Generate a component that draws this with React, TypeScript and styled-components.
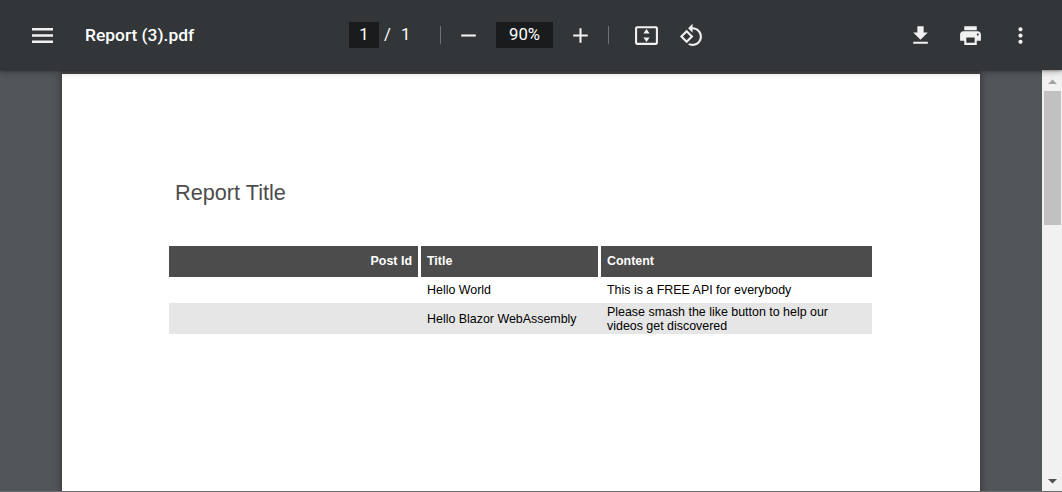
import React from "react";
import styled, { createGlobalStyle } from "styled-components";

const GlobalStyle = createGlobalStyle`
  *, *::before, *::after { box-sizing: border-box; }
  html, body { margin: 0; padding: 0; overflow: hidden; }
`;

const Viewer = styled.div`
  display: flex;
  flex-direction: column;
  width: 1062px;
  height: 492px;
  background: #525659;
  border-bottom: 1px solid #6b6b6b;
  overflow: hidden;
`;

const Toolbar = styled.header`
  position: relative;
  z-index: 1;
  flex: none;
  display: flex;
  align-items: center;
  height: 70px;
  padding: 1px 29px 0 30px;
  background: #323639;
  color: #fff;
  font: 400 17.4px/26px Roboto, sans-serif;
  box-shadow: 0 -2px 8px rgba(0, 0, 0, 0.09), 0 4px 8px rgba(0, 0, 0, 0.06),
    0 1px 2px rgba(0, 0, 0, 0.3), 0 2px 6px rgba(0, 0, 0, 0.15);
`;

const IconButton = styled.button<{ $gap?: number }>`
  flex: none;
  display: flex;
  width: 25px;
  height: 25px;
  margin: 0 0 0 ${(p) => p.$gap ?? 0}px;
  padding: 0;
  border: 0;
  background: none;
  color: #f1f1f1;

  svg {
    display: block;
    width: 25px;
    height: 25px;
    fill: currentColor;
  }
`;

const FileName = styled.span`
  width: 264px;
  margin: -2px 0 0 30px;
  font-weight: 500;
  font-size: 17.4px;
  white-space: nowrap;
`;

const Field = styled.span<{ $width: number; $gap?: number }>`
  flex: none;
  width: ${(p) => p.$width}px;
  height: 26px;
  margin: -1px 0 0 ${(p) => p.$gap ?? 0}px;
  background: #191b1c;
  font-size: 16.7px;
  line-height: 26px;
  text-align: center;
`;

const PageCount = styled.span`
  display: flex;
  gap: 10px;
  width: 61px;
  padding-left: 5px;
  margin-top: -1px;
  font-size: 16.7px;
`;

const Divider = styled.span<{ $gap?: number }>`
  flex: none;
  width: 1px;
  height: 18px;
  margin: -1px 0 0 ${(p) => p.$gap ?? 0}px;
  background: #6f7274;
`;

const Actions = styled.div`
  display: flex;
  gap: 25px;
  margin-left: auto;
`;

const Body = styled.div`
  flex: 1;
  min-height: 0;
  display: flex;
`;

const Canvas = styled.main`
  flex: 1;
  display: flex;
  padding: 4px 62px 0;
`;

const Page = styled.article`
  width: 918px;
  padding: 107px 108px 0 107px;
  background: #fff;
  color: #000;
  font: 12.43px/14px "Liberation Sans", Arial, sans-serif;
  box-shadow: 0 0 6px 2px rgba(48, 40, 48, 0.6);
`;

const ReportTitle = styled.h1`
  margin: 0 0 41px;
  padding-left: 6px;
  color: #4c4c4c;
  font-size: 21.7px;
  font-weight: 400;
  line-height: 24px;
`;

const Row = styled.div<{ $height: number; $shaded?: boolean }>`
  display: grid;
  grid-template-columns: 249px 177px 271px;
  column-gap: 3px;
  height: ${(p) => p.$height}px;
  background: ${(p) => (p.$shaded ? "#e6e6e6" : "transparent")};
`;

const Cell = styled.div`
  display: flex;
  align-items: center;
  padding: 0 6px;
`;

const HeadCell = styled(Cell)<{ $right?: boolean }>`
  justify-content: ${(p) => (p.$right ? "flex-end" : "flex-start")};
  padding-bottom: 2px;
  background: #4c4c4c;
  color: #fff;
  font-weight: 700;
`;

const ScrollTrack = styled.aside`
  flex: none;
  display: flex;
  flex-direction: column;
  align-items: center;
  width: 20px;
  background: #f1f1f1;
`;

const ScrollArrow = styled.svg`
  flex: none;
  display: block;
  width: 20px;
  height: 21px;
`;

const ScrollThumb = styled.div`
  width: 17px;
  height: 134px;
  margin: 0 1px auto 2px;
  background: #c1c1c1;
`;

const Icon = ({ d }: { d: string }) => (
  <svg viewBox="0 0 24 24" aria-hidden="true">
    <path d={d} />
  </svg>
);

const icons = {
  remove: "M19 13H5v-2h14v2z",
  add: "M19 13h-6v6h-2v-6H5v-2h6V5h2v6h6v2z",
  fit: "M21 3H3c-1.1 0-2 .9-2 2v14c0 1.1.9 2 2 2h18c1.1 0 2-.9 2-2V5c0-1.1-.9-2-2-2zm0 16.01H3V4.99h18v14.02zM12 5.7l-3 4.3h6zM12 18.3l3-4.3H9z",
  rotate:
    "M7.34 6.41L.86 12.9l6.49 6.48 6.49-6.48-6.5-6.49zM3.69 12.9l3.66-3.66L11 12.9l-3.66 3.66-3.65-3.66zm15.67-6.26C17.61 4.88 15.3 4 13 4V.76L8.76 5 13 9.24V6c1.79 0 3.58.68 4.95 2.05 2.73 2.73 2.73 7.17 0 9.9C16.58 19.32 14.79 20 13 20c-.97 0-1.94-.21-2.84-.61l-1.49 1.49C10.02 21.62 11.51 22 13 22c2.3 0 4.61-.88 6.36-2.64 3.52-3.51 3.52-9.21 0-12.72z",
  download: "M19 9h-4V3H9v6H5l7 7 7-7zM5 18v2h14v-2H5z",
  print:
    "M19 8H5c-1.66 0-3 1.34-3 3v6h4v4h12v-4h4v-6c0-1.66-1.34-3-3-3zm-3 11H8v-5h8v5zm3-7c-.55 0-1-.45-1-1s.45-1 1-1 1 .45 1 1-.45 1-1 1zm-1-9H6v4h12V3z",
  more: "M12 8c1.1 0 2-.9 2-2s-.9-2-2-2-2 .9-2 2 .9 2 2 2zm0 2c-1.1 0-2 .9-2 2s.9 2 2 2 2-.9 2-2-.9-2-2-2zm0 6c-1.1 0-2 .9-2 2s.9 2 2 2 2-.9 2-2-.9-2-2-2z",
};

const posts = [
  { title: "Hello World", content: "This is a FREE API for everybody", height: 26 },
  {
    title: "Hello Blazor WebAssembly",
    content: "Please smash the like button to help our videos get discovered",
    height: 31,
  },
];

export default function App() {
  return (
    <>
      <GlobalStyle />
      <Viewer>
        <Toolbar>
          <IconButton aria-label="Menu">
            <svg viewBox="0 0 25 25" aria-hidden="true">
              <path d="M2 5h21v2.5H2zM2 11.2h21v2.5H2zM2 17.5h21v2.5H2z" />
            </svg>
          </IconButton>
          <FileName>Report (3).pdf</FileName>
          <Field $width={30}>1</Field>
          <PageCount>
            <span>/</span>
            <span>1</span>
          </PageCount>
          <Divider />
          <IconButton $gap={15} aria-label="Zoom out"><Icon d={icons.remove} /></IconButton>
          <Field $width={57} $gap={15}>90%</Field>
          <IconButton $gap={15} aria-label="Zoom in"><Icon d={icons.add} /></IconButton>
          <Divider $gap={15} />
          <IconButton $gap={25} aria-label="Fit to page"><Icon d={icons.fit} /></IconButton>
          <IconButton $gap={20} aria-label="Rotate"><Icon d={icons.rotate} /></IconButton>
          <Actions>
            <IconButton aria-label="Download"><Icon d={icons.download} /></IconButton>
            <IconButton aria-label="Print"><Icon d={icons.print} /></IconButton>
            <IconButton aria-label="More"><Icon d={icons.more} /></IconButton>
          </Actions>
        </Toolbar>
        <Body>
          <Canvas>
            <Page>
              <ReportTitle>Report Title</ReportTitle>
              <Row $height={31}>
                <HeadCell $right>Post Id</HeadCell>
                <HeadCell>Title</HeadCell>
                <HeadCell>Content</HeadCell>
              </Row>
              {posts.map((post, i) => (
                <Row key={post.title} $height={post.height} $shaded={i % 2 === 1}>
                  <Cell />
                  <Cell>{post.title}</Cell>
                  <Cell>{post.content}</Cell>
                </Row>
              ))}
            </Page>
          </Canvas>
          <ScrollTrack>
            <ScrollArrow viewBox="0 0 20 21">
              <path d="M6 14L10.5 9.5L15 14z" fill="#a3a3a3" />
            </ScrollArrow>
            <ScrollThumb />
            <ScrollArrow viewBox="0 0 20 21">
              <path d="M6 9L10.5 13.5L15 9z" fill="#505050" />
            </ScrollArrow>
          </ScrollTrack>
        </Body>
      </Viewer>
    </>
  );
}
